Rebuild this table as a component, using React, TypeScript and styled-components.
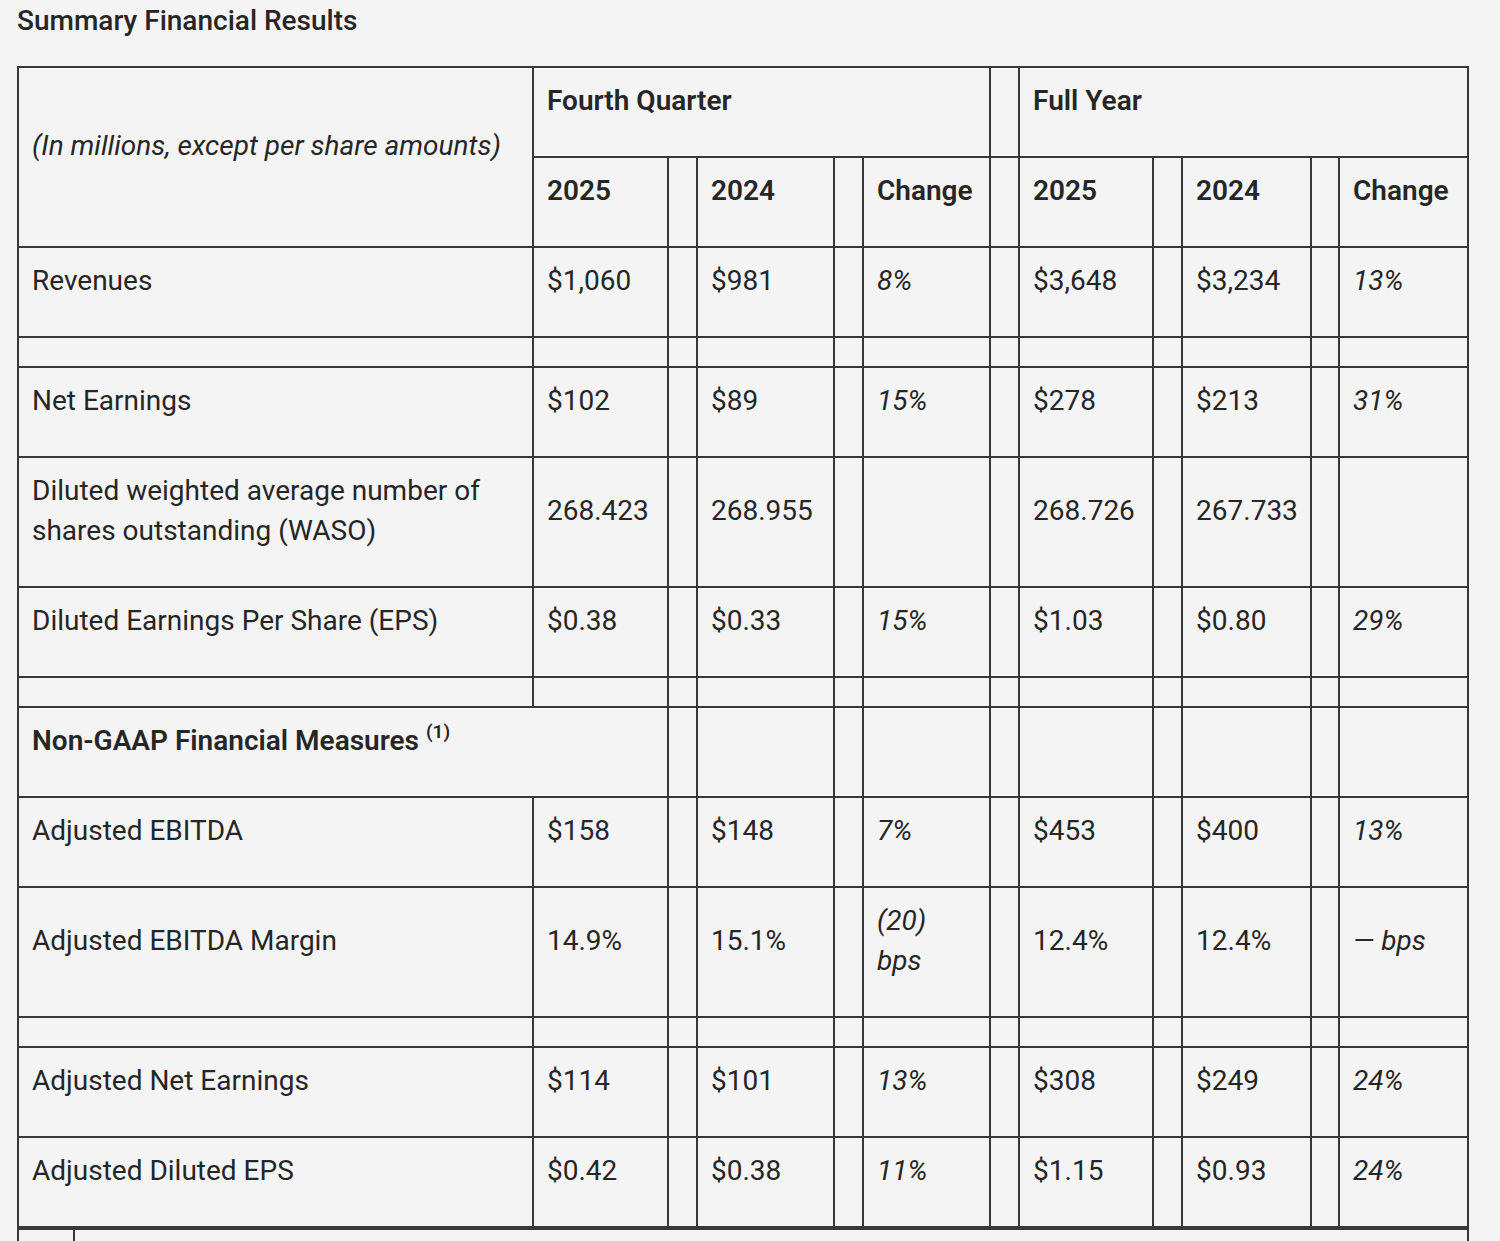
import React, { FC } from 'react'
import styled, { createGlobalStyle } from 'styled-components'

const Color = {
  BG: '#f4f4f4',
  TEXT: '#262626',
  LINE: '#383838',
}

type Row =
  | { kind: 'data'; label: string; q4: [string, string, string]; fy: [string, string, string] }
  | { kind: 'gap' }
  | { kind: 'section'; label: string; note: string }

const rows: Row[] = [
  { kind: 'data', label: 'Revenues', q4: ['$1,060', '$981', '8%'], fy: ['$3,648', '$3,234', '13%'] },
  { kind: 'gap' },
  { kind: 'data', label: 'Net Earnings', q4: ['$102', '$89', '15%'], fy: ['$278', '$213', '31%'] },
  {
    kind: 'data',
    label: 'Diluted weighted average number of shares outstanding (WASO)',
    q4: ['268.423', '268.955', ''],
    fy: ['268.726', '267.733', ''],
  },
  { kind: 'data', label: 'Diluted Earnings Per Share (EPS)', q4: ['$0.38', '$0.33', '15%'], fy: ['$1.03', '$0.80', '29%'] },
  { kind: 'gap' },
  { kind: 'section', label: 'Non-GAAP Financial Measures', note: '(1)' },
  { kind: 'data', label: 'Adjusted EBITDA', q4: ['$158', '$148', '7%'], fy: ['$453', '$400', '13%'] },
  { kind: 'data', label: 'Adjusted EBITDA Margin', q4: ['14.9%', '15.1%', '(20) bps'], fy: ['12.4%', '12.4%', '— bps'] },
  { kind: 'gap' },
  { kind: 'data', label: 'Adjusted Net Earnings', q4: ['$114', '$101', '13%'], fy: ['$308', '$249', '24%'] },
  { kind: 'data', label: 'Adjusted Diluted EPS', q4: ['$0.42', '$0.38', '11%'], fy: ['$1.15', '$0.93', '24%'] },
]

// label, then value/spacer pairs
const widths = [515, 135, 29, 137, 29, 127, 29, 134, 29, 129, 28, 129]

const Values: FC<{ values: [string, string, string]; last?: boolean }> = ({ values, last }) => (
  <>
    <Cell nowrap>{values[0]}</Cell>
    <Spacer />
    <Cell nowrap>{values[1]}</Cell>
    <Spacer />
    <Cell italic>{values[2]}</Cell>
    {!last && <Spacer />}
  </>
)

const App: FC = () => (
  <>
    <GlobalStyle />
    <Page>
      <Title>Summary Financial Results</Title>
      <Table>
        <colgroup>
          {widths.map((w, i) => (
            <col key={i} style={{ width: w }} />
          ))}
        </colgroup>
        <tbody>
          <tr>
            <Cell rowSpan={2} italic>
              (In millions, except per share amounts)
            </Cell>
            <Cell colSpan={5} head>
              Fourth Quarter
            </Cell>
            <Spacer />
            <Cell colSpan={5} head>
              Full Year
            </Cell>
          </tr>
          <tr>
            <Cell head>2025</Cell>
            <Spacer />
            <Cell head>2024</Cell>
            <Spacer />
            <Cell head>Change</Cell>
            <Spacer />
            <Cell head>2025</Cell>
            <Spacer />
            <Cell head>2024</Cell>
            <Spacer />
            <Cell head>Change</Cell>
          </tr>
          {rows.map((row, i) => {
            if (row.kind === 'gap') {
              return (
                <GapRow key={i}>
                  {widths.map((_, j) => (
                    <Spacer key={j} />
                  ))}
                </GapRow>
              )
            }
            if (row.kind === 'section') {
              return (
                <tr key={i}>
                  <Cell colSpan={2} head>
                    {row.label} <Note>{row.note}</Note>
                  </Cell>
                  {widths.slice(2).map((_, j) => (j % 2 === 0 ? <Spacer key={j} /> : <Cell key={j} />))}
                </tr>
              )
            }
            return (
              <tr key={i}>
                <Cell>{row.label}</Cell>
                <Values values={row.q4} />
                <Values values={row.fy} last />
              </tr>
            )
          })}
        </tbody>
      </Table>
      <Footnotes>
        <colgroup>
          <col style={{ width: 56 }} />
          <col />
        </colgroup>
        <tbody>
          <tr>
            <FootCell>&nbsp;</FootCell>
            <FootCell>&nbsp;</FootCell>
          </tr>
        </tbody>
      </Footnotes>
    </Page>
  </>
)

const GlobalStyle = createGlobalStyle`
  html, body {
    margin: 0;
    background: ${Color.BG};
    color: ${Color.TEXT};
    font-family: Roboto, "Liberation Sans", sans-serif;
  }
`

const Page = styled.div`
  padding: 3px 0 0 17px;
  width: 1460px;
`

const Title = styled.h2`
  margin: 0 0 27px;
  font-size: 28px;
  line-height: 36px;
  font-weight: 500;
`

const Table = styled.table`
  width: 1452px;
  table-layout: fixed;
  border-collapse: collapse;
  font-size: 28px;
  line-height: 40px;
`

const Cell = styled.td<{ head?: boolean; italic?: boolean; nowrap?: boolean }>`
  border: 2px solid ${Color.LINE};
  padding: 13px 13px 35px 13px;
  vertical-align: middle;
  text-align: left;
  font-weight: ${(p) => (p.head ? 600 : 400)};
  font-style: ${(p) => (p.italic ? 'italic' : 'normal')};
  white-space: ${(p) => (p.nowrap ? 'nowrap' : 'normal')};
`

const Spacer = styled.td`
  border: 2px solid ${Color.LINE};
  padding: 0;
`

const GapRow = styled.tr`
  height: 30px;
`

const Note = styled.sup`
  font-size: 19px;
  line-height: 0;
  vertical-align: 12px;
`

const Footnotes = styled.table`
  width: 1452px;
  table-layout: fixed;
  border-collapse: collapse;
  border-top: 2px solid ${Color.LINE};
  font-size: 28px;
  line-height: 40px;
`

const FootCell = styled.td`
  border: 2px solid ${Color.LINE};
  padding: 13px 13px 35px;
`

export default App
